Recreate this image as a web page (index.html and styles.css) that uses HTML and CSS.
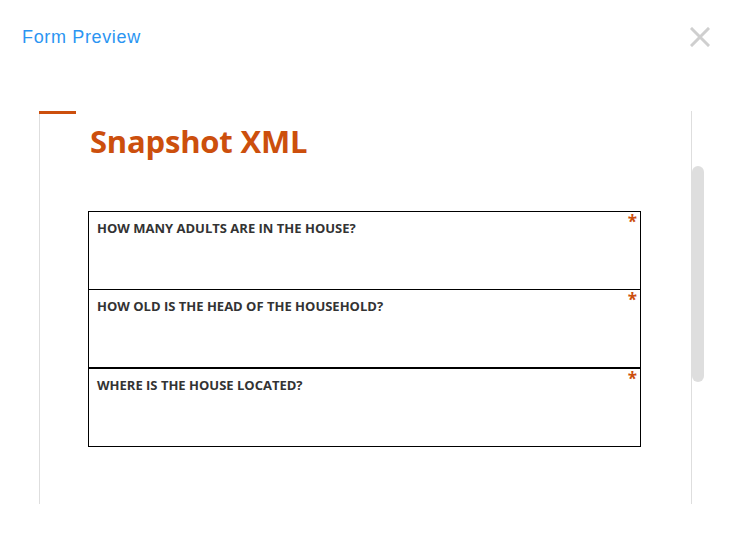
FILE: index.html
```html
<!DOCTYPE html>
<html>
<head>
<meta charset="utf-8">
<link rel="stylesheet" href="styles.css">
</head>
<body>
<div class="modal">
  <header class="modal-head">
    <h1 class="modal-title">Form Preview</h1>
    <button class="close" aria-label="Close">
      <svg width="20" height="20" viewBox="0 0 20 20"><path d="M2 2 L18 18 M18 2 L2 18" stroke="#cfcfcf" stroke-width="3" stroke-linecap="square"/></svg>
    </button>
  </header>
  <div class="viewer">
    <div class="panel">
      <div class="panel-accent"></div>
      <div class="panel-body">
        <h2 class="form-title">Snapshot XML</h2>
        <div class="questions">
          <div class="q"><span class="q-label">HOW MANY ADULTS ARE IN THE HOUSE?</span><span class="req">*</span></div>
          <div class="q"><span class="q-label">HOW OLD IS THE HEAD OF THE HOUSEHOLD?</span><span class="req">*</span></div>
          <div class="q q-thick"><span class="q-label">WHERE IS THE HOUSE LOCATED?</span><span class="req">*</span></div>
        </div>
      </div>
    </div>
    <div class="scrollbar"><div class="thumb"></div></div>
  </div>
</div>
</body>
</html>
```
FILE: styles.css
```css
html, body { margin: 0; padding: 0; background: #fff; }
body { width: 738px; height: 551px; overflow: hidden; }
.modal { display: flex; flex-direction: column; }
.modal-head {
  display: flex; justify-content: space-between; align-items: flex-start;
  padding: 26px 28px 0 22px; height: 85px; box-sizing: border-box;
}
.modal-title {
  margin: 0; font-family: "Liberation Sans", Arial, sans-serif; font-weight: 400;
  font-size: 18px; line-height: 22px; color: #2b95f2; letter-spacing: 0.65px;
}
.close { border: 0; background: none; padding: 0; margin-top: 1px; width: 20px; height: 20px; cursor: pointer; }
.close svg { display: block; }
.viewer { display: flex; margin-left: 39px; height: 393px; margin-top: 26px; }
.panel { width: 653px; border-right: 1px solid #dedede; box-sizing: border-box; display: flex; flex-direction: column; }
.panel-accent { width: 37px; height: 3px; background: #cc4f0d; flex: none; }
.panel-body { flex: 1; border-left: 1px solid #dedede; padding: 0 50px 0 48px; }
.form-title {
  margin: 6px 0 0 2px; font-family: "Open Sans", sans-serif; font-weight: 700;
  font-size: 31px; line-height: 42px; color: #cc4f0d; letter-spacing: -0.2px;
}
.questions { margin-top: 49px; border: 1px solid #000; }
.q { position: relative; height: 77px; box-sizing: border-box; padding: 8px 8px 0 8px; }
.q + .q { border-top: 1px solid #000; height: 78px; }
.q.q-thick { border-top: 2px solid #000; height: 79px; }
.q-label {
  font-family: "Open Sans", sans-serif; font-weight: 700; font-size: 13px;
  color: #333; line-height: 17px; display: block;
}
.req {
  position: absolute; right: 3px; top: 0; color: #cc4f0d;
  font-family: "Open Sans", sans-serif; font-weight: 700; font-size: 17px; line-height: 19px;
}
.scrollbar { width: 13px; padding-top: 55px; }
.thumb { width: 12px; height: 216px; background: #dedede; border-radius: 6px; }
```
